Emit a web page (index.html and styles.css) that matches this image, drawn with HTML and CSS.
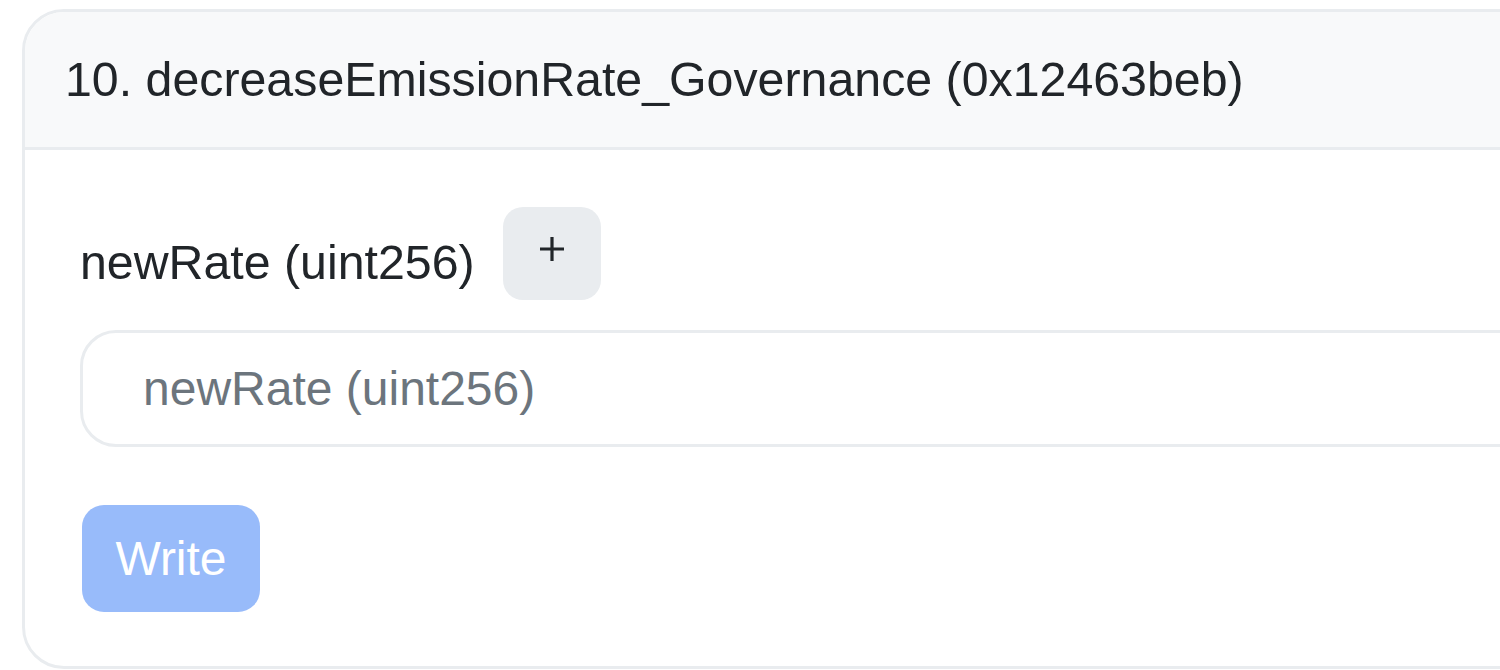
FILE: index.html
```html
<!DOCTYPE html>
<html lang="en">
<head>
<meta charset="utf-8">
<title>Write Contract</title>
<link rel="stylesheet" href="styles.css">
</head>
<body>
<div class="card">
  <div class="card-header">10. decreaseEmissionRate_Governance (0x12463beb)</div>
  <div class="card-body">
    <div class="label-row">
      <span class="field-label">newRate (uint256)</span>
      <button class="plus-btn" type="button" aria-label="Add">
        <svg width="30" height="30" viewBox="0 0 30 30"><path d="M15 3v24M3 15h24" stroke="#212529" stroke-width="3.2" fill="none"/></svg>
      </button>
    </div>
    <input class="field-input" type="text" placeholder="newRate (uint256)">
    <button class="write-btn" type="button">Write</button>
  </div>
</div>
</body>
</html>
```
FILE: styles.css
```css
html, body {
  margin: 0;
  padding: 0;
  background: #ffffff;
  overflow: hidden;
  width: 1500px;
  height: 670px;
}
body {
  font-family: "Liberation Sans", Arial, sans-serif;
  font-size: 48.3px;
  color: #212529;
}
.card {
  margin: 9px 0 0 22px;
  width: 1600px;
  height: 660px;
  border: 3px solid #e9ecef;
  border-radius: 42px;
  box-sizing: border-box;
  overflow: hidden;
  background: #fff;
}
.card-header {
  height: 138px;
  box-sizing: border-box;
  padding-left: 40px;
  display: flex;
  align-items: center;
  background: #f8f9fa;
  border-bottom: 3px solid #e9ecef;
  line-height: 1;
}
.card-body {
  padding: 57px 0 0 55px;
}
.label-row {
  display: flex;
  align-items: center;
  gap: 28px;
}
.field-label {
  line-height: 1;
  margin-top: 18px;
}
.plus-btn {
  width: 98px;
  height: 93px;
  border: none;
  border-radius: 20px;
  background: #e9ecef;
  display: flex;
  align-items: center;
  justify-content: center;
  padding: 0 0 10px 0;
}
.field-input {
  display: block;
  margin-top: 30px;
  width: 1500px;
  height: 117px;
  box-sizing: border-box;
  border: 3px solid #e9ecef;
  border-radius: 36px;
  padding: 0 0 0 60px;
  font-family: "Liberation Sans", Arial, sans-serif;
  font-size: 48px;
  color: #212529;
  outline: none;
}
.field-input::placeholder {
  color: #6c757d;
}
.write-btn {
  display: block;
  margin: 58px 0 0 2px;
  width: 178px;
  height: 107px;
  border: none;
  border-radius: 22px;
  background: #98bbfa;
  color: #ffffff;
  font-family: "Liberation Sans", Arial, sans-serif;
  font-size: 48px;
  padding: 0;
}
```
